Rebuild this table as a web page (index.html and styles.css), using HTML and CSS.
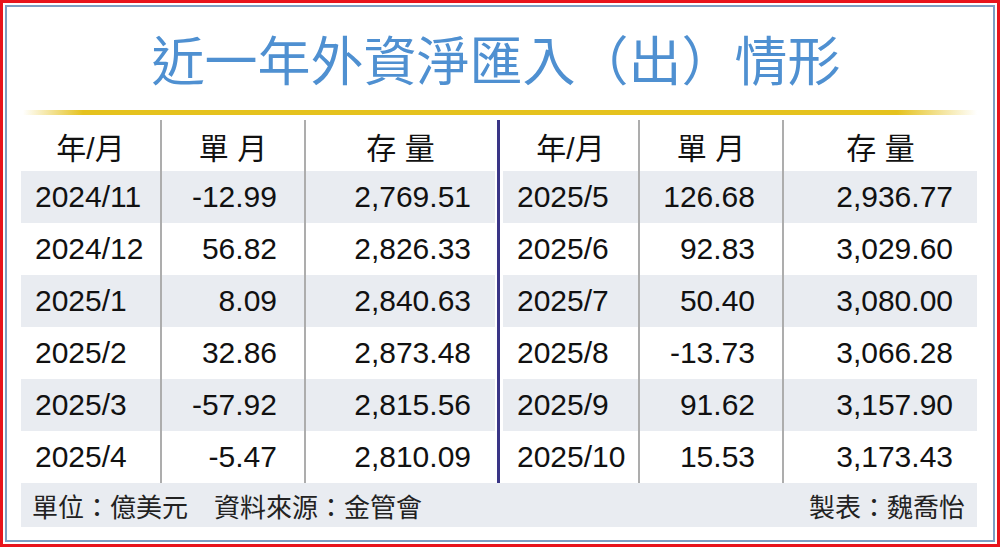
FILE: index.html
```html
<!DOCTYPE html>
<html lang="zh-Hant">
<head>
<meta charset="utf-8">
<title>近一年外資淨匯入（出）情形</title>
<link rel="stylesheet" href="styles.css">
</head>
<body>
<div class="frame">
  <div class="panel">
    <h1 class="title">近一年外資淨匯入（出）情形</h1>
    <div class="rule"></div>
    <div class="table">
      <div class="halves">
        <div class="half half-left">
          <div class="cell head">年/月</div>
          <div class="cell head">單 月</div>
          <div class="cell head">存 量</div>

          <div class="cell date shade">2024/11</div>
          <div class="cell num single shade">-12.99</div>
          <div class="cell num stock shade">2,769.51</div>

          <div class="cell date">2024/12</div>
          <div class="cell num single">56.82</div>
          <div class="cell num stock">2,826.33</div>

          <div class="cell date shade">2025/1</div>
          <div class="cell num single shade">8.09</div>
          <div class="cell num stock shade">2,840.63</div>

          <div class="cell date">2025/2</div>
          <div class="cell num single">32.86</div>
          <div class="cell num stock">2,873.48</div>

          <div class="cell date shade">2025/3</div>
          <div class="cell num single shade">-57.92</div>
          <div class="cell num stock shade">2,815.56</div>

          <div class="cell date">2025/4</div>
          <div class="cell num single">-5.47</div>
          <div class="cell num stock">2,810.09</div>
        </div>
        <div class="sep"></div>
        <div class="half half-right">
          <div class="cell head">年/月</div>
          <div class="cell head">單 月</div>
          <div class="cell head">存 量</div>

          <div class="cell date shade">2025/5</div>
          <div class="cell num single shade">126.68</div>
          <div class="cell num stock shade">2,936.77</div>

          <div class="cell date">2025/6</div>
          <div class="cell num single">92.83</div>
          <div class="cell num stock">3,029.60</div>

          <div class="cell date shade">2025/7</div>
          <div class="cell num single shade">50.40</div>
          <div class="cell num stock shade">3,080.00</div>

          <div class="cell date">2025/8</div>
          <div class="cell num single">-13.73</div>
          <div class="cell num stock">3,066.28</div>

          <div class="cell date shade">2025/9</div>
          <div class="cell num single shade">91.62</div>
          <div class="cell num stock shade">3,157.90</div>

          <div class="cell date">2025/10</div>
          <div class="cell num single">15.53</div>
          <div class="cell num stock">3,173.43</div>
        </div>
      </div>
      <div class="foot">
        <span class="source">單位：億美元<span class="gap"></span>資料來源：金管會</span>
        <span class="author">製表：魏喬怡</span>
      </div>
    </div>
  </div>
</div>
</body>
</html>
```

FILE: styles.css
```css
html, body {
  margin: 0;
  padding: 0;
  background: #ffffff;
}

body {
  width: 1000px;
  height: 547px;
  overflow: hidden;
  font-family: "Liberation Sans", "Noto Sans CJK TC", sans-serif;
  color: #111111;
}

.frame {
  box-sizing: border-box;
  width: 1000px;
  height: 547px;
  border: 3px solid #e8141c;
  padding: 2px;
  background: #ffffff;
}

.panel {
  box-sizing: border-box;
  height: 100%;
  border: 2px solid #7d9ec2;
  display: flex;
  flex-direction: column;
}

.title {
  margin: 25px 0 0 0;
  font-family: "Noto Sans CJK TC", sans-serif;
  font-weight: 400;
  font-size: 53px;
  line-height: 53px;
  color: #4f90d1;
  text-align: center;
  padding-right: 8px;
}

.rule {
  margin: 25px 16px 0 16px;
  height: 5px;
  background: linear-gradient(to right,
    rgba(230, 194, 30, 0) 0,
    #e5c21e 60px,
    #e5c21e calc(100% - 80px),
    rgba(230, 194, 30, 0) 100%);
}

.table {
  margin: 5px 16px 0 14px;
  display: flex;
  flex-direction: column;
}

.halves {
  display: flex;
}

.half {
  display: grid;
  grid-template-rows: 51px repeat(6, 52px);
}

.half-left {
  grid-template-columns: 141px 144px 189px;
}

.half-right {
  grid-template-columns: 137px 144px 193px;
}

.sep {
  width: 3px;
  margin: 0 3px 0 2px;
  background: #3a3586;
}

.cell {
  box-sizing: border-box;
  display: flex;
  align-items: center;
  font-size: 30px;
  white-space: pre;
}

.cell:nth-child(3n+1),
.cell:nth-child(3n+2) {
  border-right: 2px solid #adadad;
}

.head {
  justify-content: center;
  font-family: "Liberation Sans", "Noto Sans CJK TC", sans-serif;
  font-size: 30px;
  color: #111111;
}

.shade {
  background: #e9ecf1;
}

.date {
  padding-left: 14px;
}

.num {
  justify-content: flex-end;
}

.single {
  padding-right: 27px;
}

.stock {
  padding-right: 24px;
}

.foot {
  height: 44px;
  background: #e9ecf1;
  display: flex;
  align-items: center;
  justify-content: space-between;
  padding: 0 12px 0 11px;
  font-family: "Noto Sans CJK TC", sans-serif;
  font-size: 26px;
  color: #222222;
}

.gap {
  display: inline-block;
  width: 26px;
}
```
